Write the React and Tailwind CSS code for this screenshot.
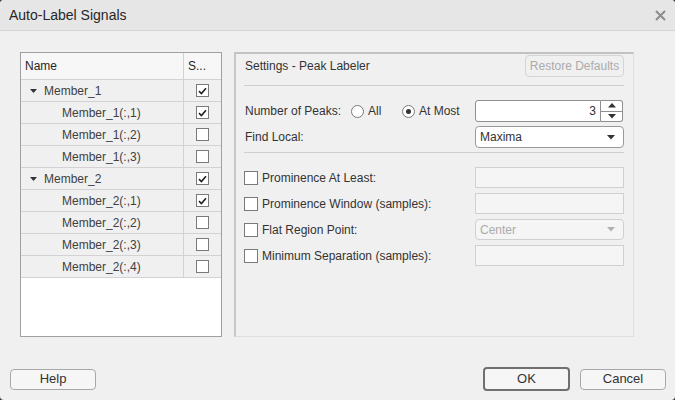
import React from "react";

const rows = [
  { label: "Member_1", parent: true, on: true },
  { label: "Member_1(:,1)", on: true },
  { label: "Member_1(:,2)", on: false },
  { label: "Member_1(:,3)", on: false },
  { label: "Member_2", parent: true, on: true },
  { label: "Member_2(:,1)", on: true },
  { label: "Member_2(:,2)", on: false },
  { label: "Member_2(:,3)", on: false },
  { label: "Member_2(:,4)", on: false },
];

const options = [
  { label: "Prominence At Least:", kind: "input" },
  { label: "Prominence Window (samples):", kind: "input" },
  { label: "Flat Region Point:", kind: "select" },
  { label: "Minimum Separation (samples):", kind: "input" },
];

function Check({ on, size = "w-[13px] h-[13px]" }) {
  return (
    <span className={`${size} shrink-0 border border-[#7a7a7a] bg-white flex items-center justify-center`}>
      {on && (
        <svg width="9" height="8" viewBox="0 0 9 8">
          <path d="M1 4.2 L3.4 6.5 L8 1.2" stroke="#1f1f1f" strokeWidth="1.6" fill="none" />
        </svg>
      )}
    </span>
  );
}

function Radio({ on, label }) {
  return (
    <div className="flex items-center">
      <span className="w-[13px] h-[13px] rounded-full border border-[#7a7a7a] bg-white flex items-center justify-center">
        {on && <span className="w-[5px] h-[5px] rounded-full bg-[#333]" />}
      </span>
      <span className="ml-[4px]">{label}</span>
    </div>
  );
}

function Caret({ color = "#333" }) {
  return (
    <svg width="8" height="5" viewBox="0 0 8 5">
      <path d="M0 0 L8 0 L4 4.5 Z" fill={color} />
    </svg>
  );
}

function Button({ children, primary, w }) {
  return (
    <button
      className={`${w} ${
        primary ? "h-[24px] border-2 border-[#707070]" : "h-[21px] border border-[#a8a8a8]"
      } rounded-[4px] bg-[#f6f6f6] text-[13px] text-[#333] flex items-center justify-center`}
    >
      {children}
    </button>
  );
}

export default function App() {
  return (
    <div className="w-[675px] h-[400px] bg-[#3c3c3c]">
      <div className="w-full h-full bg-[#f0f0f0] rounded-[4px] overflow-hidden flex flex-col font-['Liberation_Sans',Arial,sans-serif] text-[12px] text-[#333]">
        {/* title bar */}
        <div className="h-[31px] shrink-0 bg-[#e6e6e6] border-b border-[#d4d4d4] flex items-center justify-between pl-[9px] pr-[9px]">
          <span className="text-[14px] text-[#262626]">Auto-Label Signals</span>
          <svg width="11" height="11" viewBox="0 0 11 11">
            <path d="M1 1 L10 10 M10 1 L1 10" stroke="#8c8c8c" strokeWidth="2" />
          </svg>
        </div>

        <div className="flex gap-[12px] ml-[20px] mt-[21px] h-[285px]">
          {/* signal table */}
          <div className="w-[202px] h-full border border-[#a0a0a0] bg-white flex flex-col">
            <div className="h-[27px] shrink-0 flex border-b border-[#d2d2d2] bg-[#f7f7f7]">
              <div className="w-[163px] border-r border-[#d2d2d2] pl-[4px] flex items-center text-[#262626]">Name</div>
              <div className="flex-1 pl-[4px] flex items-center text-[#262626]">S...</div>
            </div>
            {rows.map((r) => (
              <div key={r.label} className="h-[22px] shrink-0 flex border-b border-[#d2d2d2] bg-[#f0f0f0] text-[#404040]">
                <div className="w-[163px] border-r border-[#d2d2d2] flex items-center">
                  {r.parent ? (
                    <>
                      <span className="ml-[9px] w-[14px] flex items-center">
                        <svg width="7" height="4" viewBox="0 0 7 4">
                          <path d="M0 0 L7 0 L3.5 4 Z" fill="#333" />
                        </svg>
                      </span>
                      <span>{r.label}</span>
                    </>
                  ) : (
                    <span className="ml-[41px]">{r.label}</span>
                  )}
                </div>
                <div className="flex-1 flex items-center justify-center">
                  <Check on={r.on} />
                </div>
              </div>
            ))}
          </div>

          {/* settings panel */}
          <div className="w-[400px] h-full border-t-2 border-l-2 border-r border-b border-t-[#c2c2c2] border-l-[#c8c8c8] border-r-[#dedede] border-b-[#dedede] pl-[8px] pr-[9px] flex flex-col">
            <div className="mt-[1px] h-[22px] flex items-center justify-between">
              <span className="ml-[1px]">Settings - Peak Labeler</span>
              <span className="w-[99px] h-[22px] rounded-[4px] border border-[#d4d4d4] text-[#ababab] flex items-center justify-center">
                Restore Defaults
              </span>
            </div>
            <div className="mt-[8px] h-px bg-[#cfcfcf]" />

            <div className="mt-[14px] h-[22px] flex items-center">
              <div className="w-[231px] flex items-center">
                <span className="w-[107px] pl-[1px]">Number of Peaks:</span>
                <div className="w-[51px]">
                  <Radio label="All" />
                </div>
                <Radio on label="At Most" />
              </div>
              <div className="flex w-[148px] h-[22px]">
                <div className="w-[126px] h-full border border-[#8f8f8f] rounded-l-[3px] bg-white flex items-center justify-end pr-[4px]">
                  3
                </div>
                <div className="w-[22px] h-full border border-l-0 border-[#8f8f8f] rounded-r-[3px] bg-white flex flex-col">
                  <div className="flex-1 border-b border-[#8f8f8f] flex items-center justify-center">
                    <svg width="8" height="5" viewBox="0 0 8 5">
                      <path d="M0 4.5 L8 4.5 L4 0 Z" fill="#333" />
                    </svg>
                  </div>
                  <div className="flex-1 flex items-center justify-center">
                    <Caret />
                  </div>
                </div>
              </div>
            </div>

            <div className="mt-[4px] h-[22px] flex items-center">
              <span className="w-[231px] pl-[1px]">Find Local:</span>
              <div className="w-[149px] h-[22px] border border-[#9a9a9a] rounded-[4px] bg-white flex items-center justify-between pl-[4px] pr-[8px]">
                <span>Maxima</span>
                <Caret />
              </div>
            </div>
            <div className="mt-[4px] h-px bg-[#cfcfcf]" />

            <div className="mt-[14px] flex flex-col gap-[5px]">
              {options.map((o) => (
                <div key={o.label} className="h-[21px] flex items-center">
                  <div className="w-[231px] flex items-center">
                    <Check size="w-[14px] h-[14px]" />
                    <span className="ml-[4px]">{o.label}</span>
                  </div>
                  {o.kind === "input" ? (
                    <div className="w-[149px] h-[21px] bg-[#f5f5f5] border border-[#d0d0d0]" />
                  ) : (
                    <div className="w-[149px] h-[21px] bg-[#f5f5f5] border border-[#d0d0d0] rounded-[4px] flex items-center justify-between pl-[4px] pr-[8px] text-[#ababab]">
                      <span>Center</span>
                      <Caret color="#b0b0b0" />
                    </div>
                  )}
                </div>
              ))}
            </div>
          </div>
        </div>

        {/* footer */}
        <div className="mt-[30px] h-[24px] flex items-center justify-between pl-[10px] pr-[9px]">
          <Button w="w-[86px]">Help</Button>
          <div className="flex items-center gap-[10px]">
            <Button primary w="w-[87px]">OK</Button>
            <Button w="w-[86px]">Cancel</Button>
          </div>
        </div>
      </div>
    </div>
  );
}
